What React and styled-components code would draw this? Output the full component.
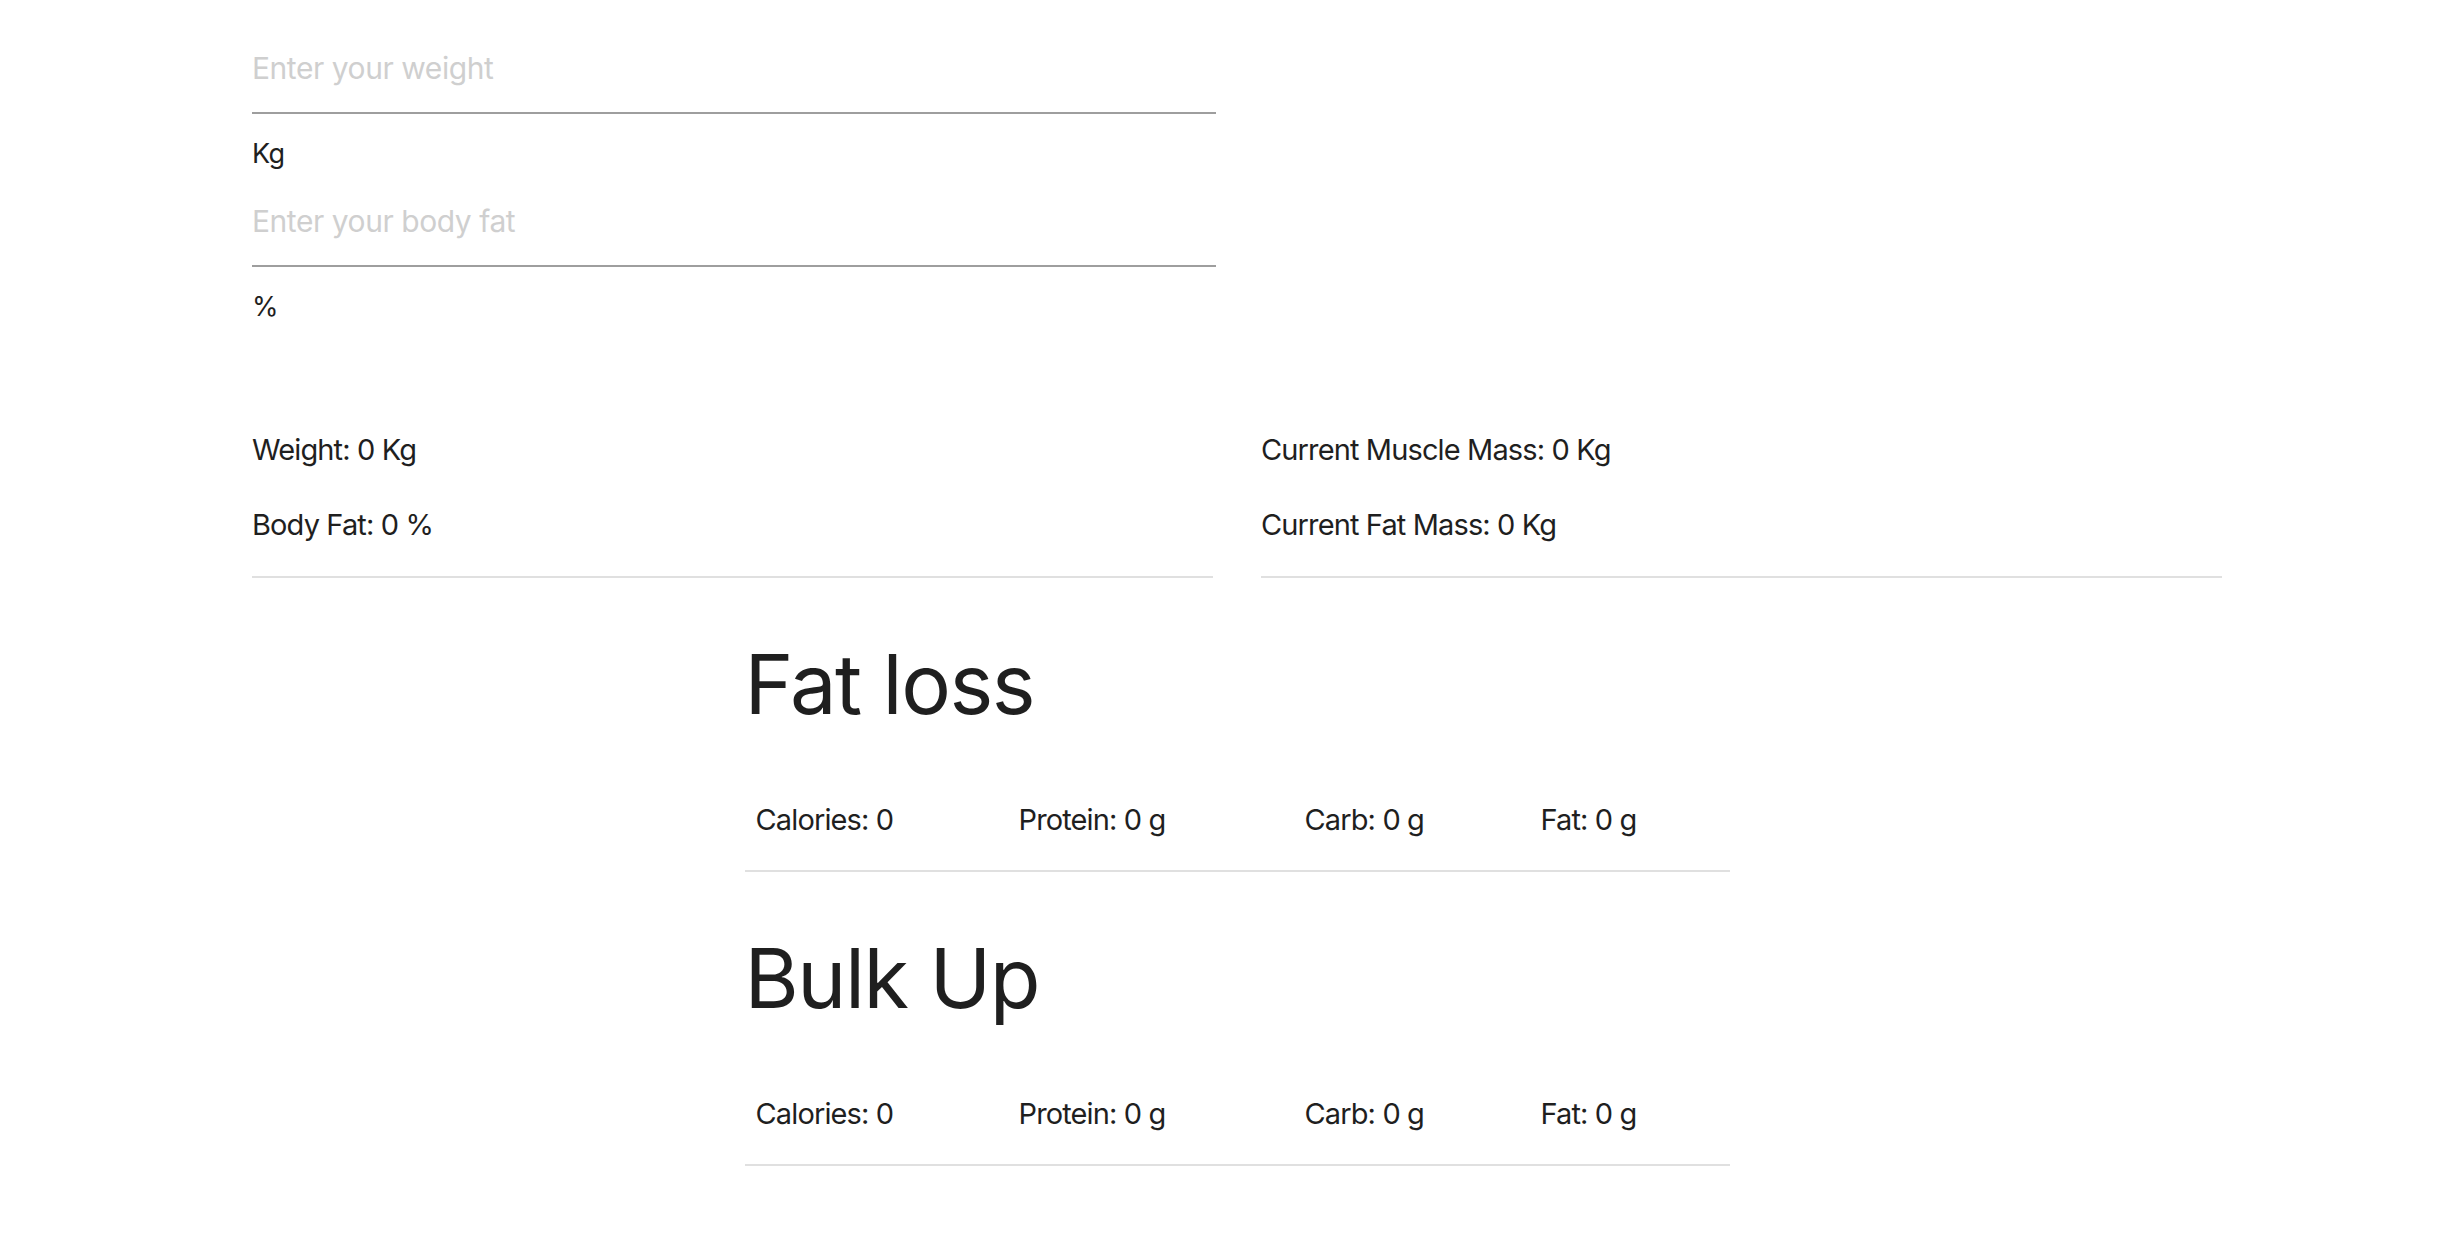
import styled, { createGlobalStyle } from 'styled-components';

const GlobalStyle = createGlobalStyle`
  body {
    margin: 0;
    background: #ffffff;
    font-family: Inter, "Noto Sans", sans-serif;
    color: #1f1f1f;
  }
`;

const Page = styled.div`
  width: 1970px;
  margin-left: 252px;
  padding-top: 24px;
`;

const Form = styled.div`
  width: 964px;
`;

const Field = styled.div`
  margin-bottom: 7px;
`;

const Input = styled.input`
  display: block;
  width: 100%;
  box-sizing: border-box;
  height: 90px;
  padding: 0;
  border: 0;
  border-bottom: 2px solid #9e9e9e;
  outline: none;
  background: transparent;
  font-family: inherit;
  font-size: 30px;
  line-height: 36px;
  letter-spacing: -0.015em;
  color: #1f1f1f;

  &::placeholder {
    color: #cfcfcf;
  }
`;

const Unit = styled.div`
  margin-top: 23px;
  font-size: 27px;
  line-height: 33px;
  letter-spacing: -0.02em;
`;

const Stats = styled.div`
  display: grid;
  grid-template-columns: 1fr 1fr;
  column-gap: 48px;
  margin-top: 109px;
`;

const StatCol = styled.div`
  border-bottom: 2px solid #e0e0e0;
  padding-bottom: 33px;
`;

const StatLine = styled.p`
  margin: 0;
  font-size: 29px;
  line-height: 36px;
  letter-spacing: -0.03em;

  & + & {
    margin-top: 39px;
  }
`;

const Plan = styled.section`
  width: 985px;
  margin: 56px auto 0;
`;

const PlanTitle = styled.h1`
  margin: 0;
  font-size: 83px;
  font-weight: 400;
  line-height: 100px;
  letter-spacing: -0.018em;
  color: #1f1f1f;
`;

const Macros = styled.div`
  display: grid;
  grid-template-columns: 263px 286px 236px 1fr;
  margin-top: 68px;
  padding-bottom: 32px;
  border-bottom: 2px solid #e0e0e0;
`;

const Macro = styled.span`
  padding-left: 11px;
  font-size: 29px;
  line-height: 36px;
  letter-spacing: -0.03em;
`;

function PlanBlock({ title }) {
  return (
    <Plan>
      <PlanTitle>{title}</PlanTitle>
      <Macros>
        <Macro>Calories: 0</Macro>
        <Macro>Protein: 0 g</Macro>
        <Macro>Carb: 0 g</Macro>
        <Macro>Fat: 0 g</Macro>
      </Macros>
    </Plan>
  );
}

function App() {
  return (
    <>
      <GlobalStyle />
      <Page>
        <Form>
          <Field>
            <Input type="number" placeholder="Enter your weight" />
            <Unit>Kg</Unit>
          </Field>
          <Field>
            <Input type="number" placeholder="Enter your body fat" />
            <Unit>%</Unit>
          </Field>
        </Form>
        <Stats>
          <StatCol>
            <StatLine>Weight: 0 Kg</StatLine>
            <StatLine>Body Fat: 0 %</StatLine>
          </StatCol>
          <StatCol>
            <StatLine>Current Muscle Mass: 0 Kg</StatLine>
            <StatLine>Current Fat Mass: 0 Kg</StatLine>
          </StatCol>
        </Stats>
        <PlanBlock title="Fat loss" />
        <PlanBlock title="Bulk Up" />
      </Page>
    </>
  );
}

export default App;
